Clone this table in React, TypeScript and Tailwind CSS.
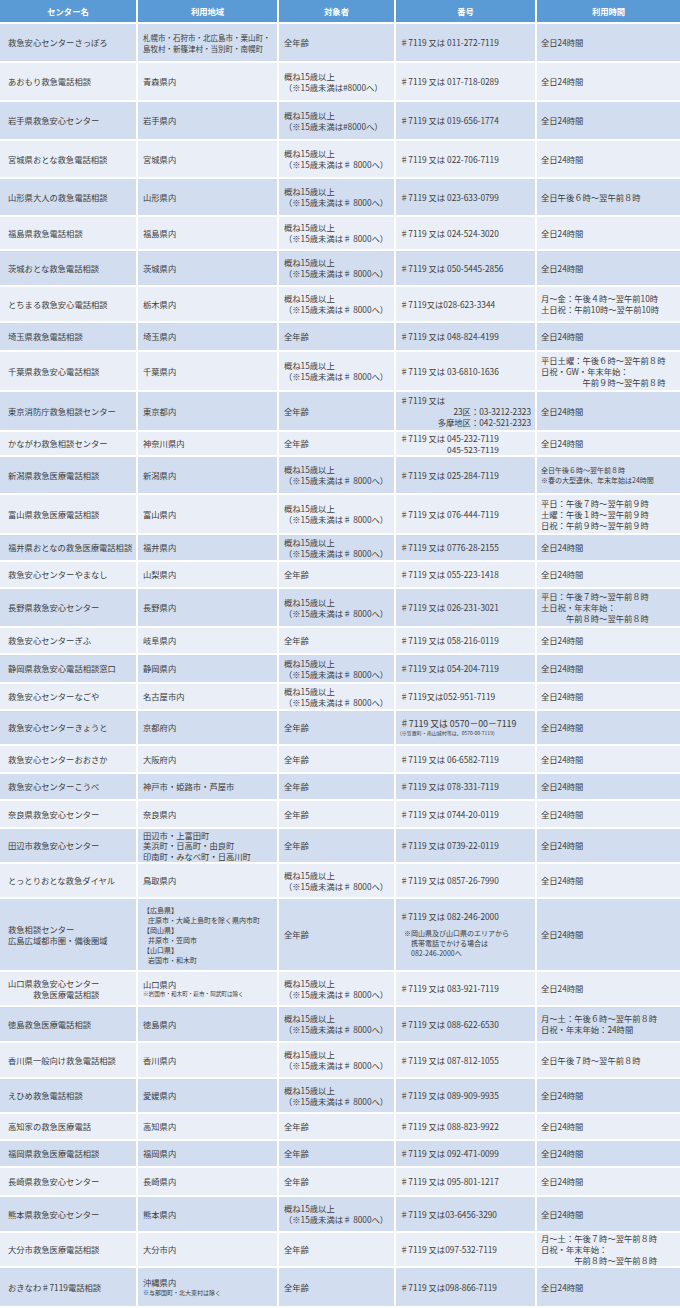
import React from "react";

type Row = {
  h: string;
  name: React.ReactNode;
  area: React.ReactNode;
  target: React.ReactNode;
  num: React.ReactNode;
  time: React.ReactNode;
};

const L = ({ children, className = "" }: { children: React.ReactNode; className?: string }) => (
  <div className={className}>{children}</div>
);

const T = ({ v = 0 }: { v?: number }) => (
  <div>
    <div>概ね15歳以上</div>
    <div>{v === 1 ? "（※15歳未満は#8000へ）" : "（※15歳未満は♯ 8000へ）"}</div>
  </div>
);

const ALL = "全年齢";
const H24 = "全日24時間";
const N = (n: string) => `♯7119 又は ${n}`;

const rows: Row[] = [
  {
    h: "h-[37px]",
    name: "救急安心センターさっぽろ",
    area: (
      <div className="text-[7.5px]">
        <div>札幌市・石狩市・北広島市・栗山町・</div>
        <div>島牧村・新篠津村・当別町・南幌町</div>
      </div>
    ),
    target: ALL,
    num: N("011-272-7119"),
    time: H24,
  },
  { h: "h-[37px]", name: "あおもり救急電話相談", area: "青森県内", target: <T v={1} />, num: N("017-718-0289"), time: H24 },
  { h: "h-[37px]", name: "岩手県救急安心センター", area: "岩手県内", target: <T v={1} />, num: N("019-656-1774"), time: H24 },
  { h: "h-[36px]", name: "宮城県おとな救急電話相談", area: "宮城県内", target: <T />, num: N("022-706-7119"), time: H24 },
  { h: "h-[36px]", name: "山形県大人の救急電話相談", area: "山形県内", target: <T />, num: N("023-633-0799"), time: "全日午後６時～翌午前８時" },
  { h: "h-[32px]", name: "福島県救急電話相談", area: "福島県内", target: <T />, num: N("024-524-3020"), time: H24 },
  { h: "h-[34px]", name: "茨城おとな救急電話相談", area: "茨城県内", target: <T />, num: N("050-5445-2856"), time: H24 },
  {
    h: "h-[34px]",
    name: "とちまる救急安心電話相談",
    area: "栃木県内",
    target: <T />,
    num: "♯7119又は028-623-3344",
    time: (
      <div>
        <div>月～金：午後４時～翌午前10時</div>
        <div>土日祝：午前10時～翌午前10時</div>
      </div>
    ),
  },
  { h: "h-[27px]", name: "埼玉県救急電話相談", area: "埼玉県内", target: ALL, num: N("048-824-4199"), time: H24 },
  {
    h: "h-[38px]",
    name: "千葉県救急安心電話相談",
    area: "千葉県内",
    target: <T />,
    num: N("03-6810-1636"),
    time: (
      <div className="inline-block">
        <div>平日土曜：午後６時～翌午前８時</div>
        <div>日祝・GW・年末年始：</div>
        <div className="text-right">午前９時～翌午前８時</div>
      </div>
    ),
  },
  {
    h: "h-[38px]",
    name: "東京消防庁救急相談センター",
    area: "東京都内",
    target: ALL,
    num: (
      <div className="w-full pr-[4px]">
        <div>♯7119 又は</div>
        <div className="text-right">23区：03-3212-2323</div>
        <div className="text-right">多摩地区：042-521-2323</div>
      </div>
    ),
    time: H24,
  },
  {
    h: "h-[23px]",
    name: "かながわ救急相談センター",
    area: "神奈川県内",
    target: ALL,
    num: (
      <div className="inline-block">
        <div>♯7119 又は 045-232-7119</div>
        <div className="text-right">045-523-7119</div>
      </div>
    ),
    time: H24,
  },
  {
    h: "h-[36px]",
    name: "新潟県救急医療電話相談",
    area: "新潟県内",
    target: <T />,
    num: N("025-284-7119"),
    time: (
      <div className="text-[7px] leading-[10px]">
        <div>全日午後６時～翌午前８時</div>
        <div>※春の大型連休、年末年始は24時間</div>
      </div>
    ),
  },
  {
    h: "h-[38px]",
    name: "富山県救急医療電話相談",
    area: "富山県内",
    target: <T />,
    num: N("076-444-7119"),
    time: (
      <div>
        <div>平日：午後７時～翌午前９時</div>
        <div>土曜：午後１時～翌午前９時</div>
        <div>日祝：午前９時～翌午前９時</div>
      </div>
    ),
  },
  { h: "h-[25px]", name: "福井県おとなの救急医療電話相談", area: "福井県内", target: <T />, num: N("0776-28-2155"), time: H24 },
  { h: "h-[25px]", name: "救急安心センターやまなし", area: "山梨県内", target: ALL, num: N("055-223-1418"), time: H24 },
  {
    h: "h-[37px]",
    name: "長野県救急安心センター",
    area: "長野県内",
    target: <T />,
    num: N("026-231-3021"),
    time: (
      <div className="inline-block">
        <div>平日：午後７時～翌午前８時</div>
        <div>土日祝・年末年始：</div>
        <div className="text-right">午前８時～翌午前８時</div>
      </div>
    ),
  },
  { h: "h-[25px]", name: "救急安心センターぎふ", area: "岐阜県内", target: ALL, num: N("058-216-0119"), time: H24 },
  { h: "h-[27px]", name: "静岡県救急安心電話相談窓口", area: "静岡県内", target: <T />, num: N("054-204-7119"), time: H24 },
  { h: "h-[25px]", name: "救急安心センターなごや", area: "名古屋市内", target: <T />, num: "♯7119又は052-951-7119", time: H24 },
  {
    h: "h-[33px]",
    name: "救急安心センターきょうと",
    area: "京都府内",
    target: ALL,
    num: (
      <div>
        <div className="text-[8.8px]">♯7119 又は 0570－00－7119</div>
        <div className="text-[5px] leading-[8px]">(※笠置町・南山城村等は、0570-00-7119)</div>
      </div>
    ),
    time: H24,
  },
  { h: "h-[26px]", name: "救急安心センターおおさか", area: "大阪府内", target: ALL, num: N("06-6582-7119"), time: H24 },
  { h: "h-[25px]", name: "救急安心センターこうべ", area: "神戸市・姫路市・芦屋市", target: ALL, num: N("078-331-7119"), time: H24 },
  { h: "h-[26px]", name: "奈良県救急安心センター", area: "奈良県内", target: ALL, num: N("0744-20-0119"), time: H24 },
  {
    h: "h-[33px]",
    name: "田辺市救急安心センター",
    area: (
      <div className="leading-[10.5px]">
        <div>田辺市・上富田町</div>
        <div>美浜町・日高町・由良町</div>
        <div>印南町・みなべ町・日高川町</div>
      </div>
    ),
    target: ALL,
    num: N("0739-22-0119"),
    time: H24,
  },
  { h: "h-[33px]", name: "とっとりおとな救急ダイヤル", area: "鳥取県内", target: <T />, num: N("0857-26-7990"), time: H24 },
  {
    h: "h-[71px]",
    name: (
      <div>
        <div>救急相談センター</div>
        <div>広島広域都市圏・備後圏域</div>
      </div>
    ),
    area: (
      <div className="text-[7px] leading-[10px]">
        <div>【広島県】</div>
        <div className="pl-[5px]">庄原市・大崎上島町を除く県内市町</div>
        <div>【岡山県】</div>
        <div className="pl-[5px]">井原市・笠岡市</div>
        <div>【山口県】</div>
        <div className="pl-[5px]">岩国市・和木町</div>
      </div>
    ),
    target: ALL,
    num: (
      <div>
        <div className="mb-[6px]">♯7119 又は 082-246-2000</div>
        <div className="pl-[4px] text-[7px] leading-[10px]">
          <div>※岡山県及び山口県のエリアから</div>
          <div className="pl-[7px]">携帯電話でかける場合は</div>
          <div className="pl-[7px]">082-246-2000へ</div>
        </div>
      </div>
    ),
    time: H24,
  },
  {
    h: "h-[33px]",
    name: (
      <div className="inline-block">
        <div>山口県救急安心センター</div>
        <div className="text-right">救急医療電話相談</div>
      </div>
    ),
    area: (
      <div>
        <div>山口県内</div>
        <div className="text-[5.6px] leading-[8px]">※岩国市・和木町・萩市・阿武町は除く</div>
      </div>
    ),
    target: <T />,
    num: N("083-921-7119"),
    time: H24,
  },
  {
    h: "h-[34px]",
    name: "徳島救急医療電話相談",
    area: "徳島県内",
    target: <T />,
    num: N("088-622-6530"),
    time: (
      <div>
        <div>月～土：午後６時～翌午前８時</div>
        <div>日祝・年末年始：24時間</div>
      </div>
    ),
  },
  { h: "h-[34px]", name: "香川県一般向け救急電話相談", area: "香川県内", target: <T />, num: N("087-812-1055"), time: "全日午後７時～翌午前８時" },
  { h: "h-[33px]", name: "えひめ救急電話相談", area: "愛媛県内", target: <T />, num: N("089-909-9935"), time: H24 },
  { h: "h-[25px]", name: "高知家の救急医療電話", area: "高知県内", target: ALL, num: N("088-823-9922"), time: H24 },
  { h: "h-[25px]", name: "福岡県救急医療電話相談", area: "福岡県内", target: ALL, num: N("092-471-0099"), time: H24 },
  { h: "h-[27px]", name: "長崎県救急安心センター", area: "長崎県内", target: ALL, num: N("095-801-1217"), time: H24 },
  { h: "h-[34px]", name: "熊本県救急安心センター", area: "熊本県内", target: <T />, num: "♯7119 又は03-6456-3290", time: H24 },
  {
    h: "h-[33px]",
    name: "大分市救急医療電話相談",
    area: "大分市内",
    target: ALL,
    num: "♯7119 又は097-532-7119",
    time: (
      <div className="inline-block">
        <div>月～土：午後７時～翌午前８時</div>
        <div>日祝・年末年始：</div>
        <div className="text-right">午前８時～翌午前８時</div>
      </div>
    ),
  },
  {
    h: "h-[38px]",
    name: "おきなわ♯7119電話相談",
    area: (
      <div>
        <div>沖縄県内</div>
        <div className="text-[6px] leading-[9px]">※与那国町・北大東村は除く</div>
      </div>
    ),
    target: ALL,
    num: "♯7119 又は098-866-7119",
    time: H24,
  },
];

const cols = "grid grid-cols-[136px_139px_115px_139px_1fr] gap-x-[2px]";

export default function App() {
  return (
    <div
      className="w-[680px] bg-white pb-[2px] text-[8.3px] leading-[11px] text-[#3c3c3c]"
      style={{ fontFamily: '"Noto Sans CJK JP", "Noto Sans", sans-serif' }}
    >
      <div className={`${cols} h-[22px] mb-[2px]`}>
        {["センター名", "利用地域", "対象者", "番号", "利用時間"].map((t) => (
          <div key={t} className="flex items-center justify-center bg-[#5b9bd5] font-bold text-white">
            {t}
          </div>
        ))}
      </div>
      <div className="flex flex-col gap-y-[2px]">
        {rows.map((r, i) => {
          const bg = i % 2 === 0 ? "bg-[#d2deef]" : "bg-[#eaeff7]";
          return (
            <div key={i} className={`${cols} ${r.h}`}>
              <div className={`${bg} flex items-center pl-[8px] overflow-hidden whitespace-nowrap`}>{r.name}</div>
              <div className={`${bg} flex items-center pl-[5px] overflow-hidden whitespace-nowrap`}>{r.area}</div>
              <div className={`${bg} flex items-center pl-[5px] overflow-hidden whitespace-nowrap`}>{r.target}</div>
              <div className={`${bg} flex items-center pl-[4px] overflow-hidden whitespace-nowrap`}>{r.num}</div>
              <div className={`${bg} flex items-center pl-[4px] overflow-hidden whitespace-nowrap`}>{r.time}</div>
            </div>
          );
        })}
      </div>
    </div>
  );
}
